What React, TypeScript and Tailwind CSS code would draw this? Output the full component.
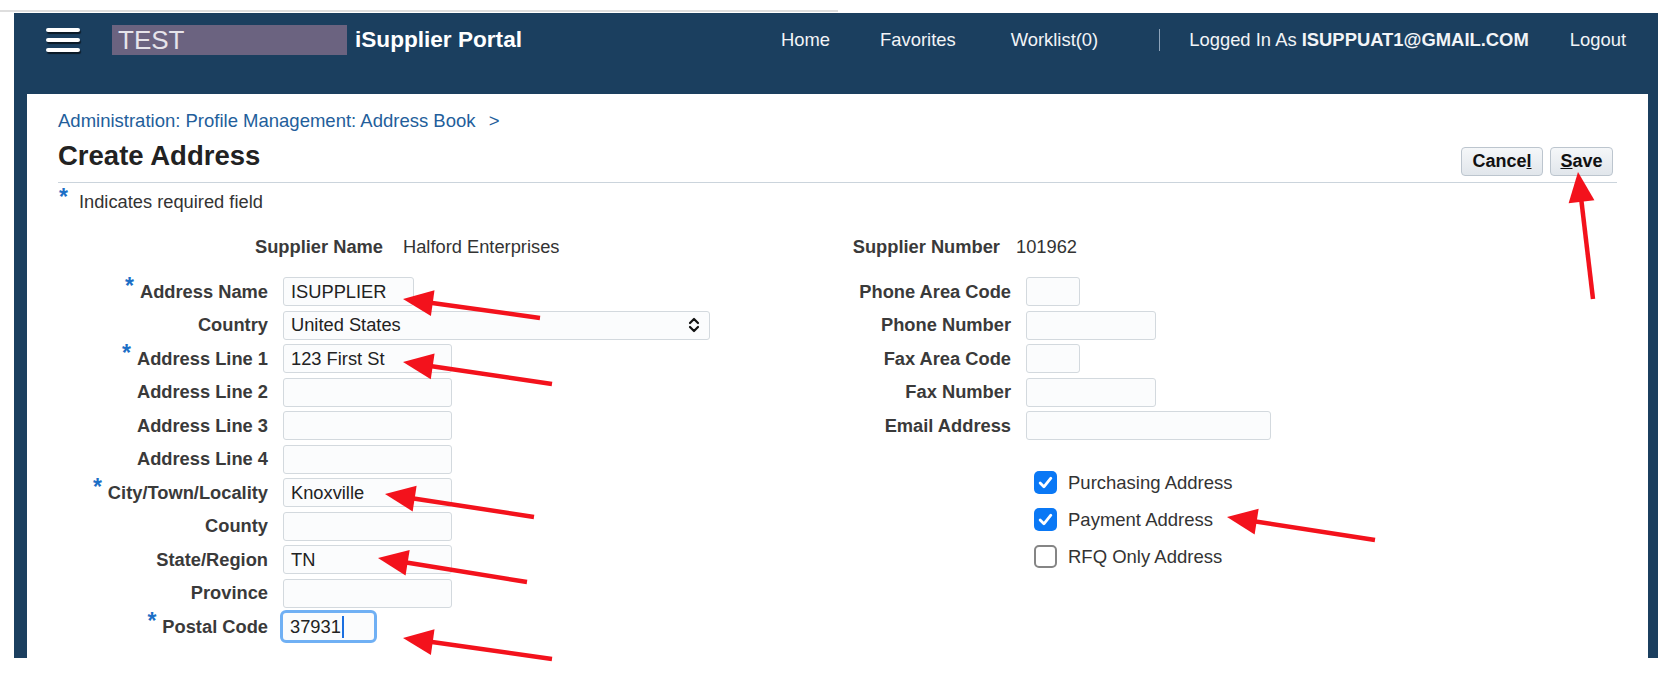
import React from "react";

type Arrow = { tip: [number, number]; tail: [number, number] };

const arrows: Arrow[] = [
  { tip: [403, 299], tail: [540, 318] },
  { tip: [403, 362], tail: [552, 384] },
  { tip: [385, 494], tail: [534, 517] },
  { tip: [378, 558], tail: [527, 582] },
  { tip: [403, 638], tail: [552, 659] },
  { tip: [1227, 517], tail: [1375, 540] },
  { tip: [1578, 172], tail: [1593, 299] },
];

function arrowHead(a: Arrow) {
  const [tx, ty] = a.tip;
  const [sx, sy] = a.tail;
  const len = Math.hypot(tx - sx, ty - sy);
  const ux = (tx - sx) / len;
  const uy = (ty - sy) / len;
  const bx = tx - ux * 30;
  const by = ty - uy * 30;
  const px = -uy * 13;
  const py = ux * 13;
  return {
    points: `${tx},${ty} ${bx + px},${by + py} ${bx - px},${by - py}`,
    lineEnd: [tx - ux * 24, ty - uy * 24],
  };
}

function Star() {
  return (
    <span className="relative top-[-4px] mr-[6px] text-[23px] font-bold leading-none text-[#1c6fc6]">*</span>
  );
}

function Field({ w, value }: { w: string; value?: string }) {
  return (
    <div className={`${w} h-[29px] rounded-[3px] border border-[#d3d9de] bg-[#fbfcfd] pl-[7px] text-[18.3px] leading-[27px] text-[#222]`}>
      {value}
    </div>
  );
}

const leftRows: { label: string; req?: boolean; w: string; value?: string }[] = [
  { label: "Address Name", req: true, w: "w-[131px]", value: "ISUPPLIER" },
  { label: "Country", w: "w-[427px]", value: "United States" },
  { label: "Address Line 1", req: true, w: "w-[169px]", value: "123 First St" },
  { label: "Address Line 2", w: "w-[169px]" },
  { label: "Address Line 3", w: "w-[169px]" },
  { label: "Address Line 4", w: "w-[169px]" },
  { label: "City/Town/Locality", req: true, w: "w-[169px]", value: "Knoxville" },
  { label: "County", w: "w-[169px]" },
  { label: "State/Region", w: "w-[169px]", value: "TN" },
  { label: "Province", w: "w-[169px]" },
  { label: "Postal Code", req: true, w: "w-[97px]", value: "37931" },
];

const rightRows = [
  { label: "Phone Area Code", w: "w-[54px]" },
  { label: "Phone Number", w: "w-[130px]" },
  { label: "Fax Area Code", w: "w-[54px]" },
  { label: "Fax Number", w: "w-[130px]" },
  { label: "Email Address", w: "w-[245px]" },
];

const checks = [
  { label: "Purchasing Address", on: true },
  { label: "Payment Address", on: true },
  { label: "RFQ Only Address", on: false },
];

export default function App() {
  return (
    <div className="relative h-[680px] w-[1676px] overflow-hidden bg-white font-['Liberation_Sans',Arial,sans-serif]">
      <div className="h-[13px] pt-[10px]">
        <div className="h-[2px] w-[838px] bg-[#dedede]" />
      </div>

      <div className="ml-[14px] mr-[18px] flex h-[645px] flex-col bg-[#1b3f5f]">
        {/* header */}
        <div className="flex h-[81px] items-start pt-[11px] pl-[32px] pr-[32px] text-white">
          <div className="flex h-[32px] items-center">
            <div className="flex w-[34px] flex-col gap-[6px]">
              <div className="h-[4px] rounded-[2px] bg-white shadow-[1px_2px_1px_rgba(0,0,0,0.6)]" />
              <div className="h-[4px] rounded-[2px] bg-white shadow-[1px_2px_1px_rgba(0,0,0,0.6)]" />
              <div className="h-[4px] rounded-[2px] bg-white shadow-[1px_2px_1px_rgba(0,0,0,0.6)]" />
            </div>
            <div className="ml-[32px] flex h-[30px] w-[235px] items-center bg-[#6b6380] pl-[6px] text-[26px] leading-none text-[#e6e4ea]">
              TEST
            </div>
            <div className="ml-[8px] text-[22.6px] font-bold">iSupplier Portal</div>
          </div>
          <div className="ml-auto flex h-[32px] items-center text-[18.4px] text-[#f2f4f7]">
            <span>Home</span>
            <span className="ml-[50px]">Favorites</span>
            <span className="ml-[55px]">Worklist(0)</span>
            <span className="ml-[61px] h-[22px] w-[1px] bg-[#8ea4bb]" />
            <span className="ml-[29px]">
              Logged In As <b>ISUPPUAT1@GMAIL.COM</b>
            </span>
            <span className="ml-[41px]">Logout</span>
          </div>
        </div>

        {/* content panel */}
        <div className="ml-[13px] mr-[10px] flex-1 bg-white pl-[31px] pr-[31px] pt-[16px] text-[#333]">
          <div className="text-[18.5px] leading-[21px] text-[#235e9b]">
            Administration: Profile Management: Address Book <span className="ml-[8px]">&gt;</span>
          </div>

          <div className="flex items-end justify-between border-b border-[#cbd4dc]">
            <h1 className="mb-[9px] mt-[8px] text-[27.5px] font-bold leading-[34px] text-[#222]">Create Address</h1>
            <div className="mb-[6px] mr-[4px] flex gap-[7px]">
              <button className="h-[29px] w-[82px] rounded-[4px] border border-[#bcc5ce] bg-gradient-to-b from-[#f5f7f9] to-[#e1e6eb] text-[18px] font-bold text-[#111]">
                Cance<span className="underline">l</span>
              </button>
              <button className="h-[29px] w-[63px] rounded-[4px] border border-[#bcc5ce] bg-gradient-to-b from-[#f5f7f9] to-[#e1e6eb] text-[18px] font-bold text-[#111]">
                <span className="underline">S</span>ave
              </button>
            </div>
          </div>

          <div className="mt-[8px] flex items-start text-[18.3px] leading-[22px] text-[#333]">
            <span className="mr-[11px] mt-[-5px] ml-[1px] text-[23px] font-bold text-[#1c6fc6]">*</span>
            <span>Indicates required field</span>
          </div>

          {/* supplier row */}
          <div className="mt-[22px] flex h-[24px] items-center text-[18.3px]">
            <div className="flex w-[737px] items-center">
              <div className="w-[325px] text-right font-bold text-[#3a3a3a]">Supplier Name</div>
              <div className="ml-[20px]">Halford Enterprises</div>
            </div>
            <div className="w-[205px] text-right font-bold text-[#3a3a3a]">Supplier Number</div>
            <div className="ml-[16px]">101962</div>
          </div>

          {/* form */}
          <div className="mt-[18px] flex items-start text-[18.3px]">
            <div className="flex w-[738px] flex-col gap-[4.5px]">
              {leftRows.map((r) => (
                <div key={r.label} className="flex h-[29px] items-center">
                  <div className="w-[210px] text-right font-bold text-[#3a3a3a]">
                    {r.req && <Star />}
                    {r.label}
                  </div>
                  <div className="ml-[15px]">
                    {r.label === "Country" ? (
                      <div className="flex h-[29px] w-[427px] items-center justify-between rounded-[3px] border border-[#d3d9de] bg-[#fbfcfd] pl-[7px] pr-[9px] text-[18.3px] text-[#222]">
                        <span>United States</span>
                        <svg width="12" height="16" viewBox="0 0 12 16" fill="none" stroke="#111" strokeWidth="2.2" strokeLinecap="round" strokeLinejoin="round">
                          <path d="M2 6 L6 2 L10 6" />
                          <path d="M2 10 L6 14 L10 10" />
                        </svg>
                      </div>
                    ) : r.label === "Postal Code" ? (
                      <div className="ml-[-3px] flex h-[33px] w-[97px] items-center rounded-[6px] border-[3px] border-[#70b0f4] bg-[#fbfcfd] pl-[7px] text-[18.3px] text-[#222]">
                        37931
                        <span className="ml-[1px] h-[22px] w-[2px] bg-[#1a6fe0]" />
                      </div>
                    ) : (
                      <Field w={r.w} value={r.value} />
                    )}
                  </div>
                </div>
              ))}
            </div>

            <div className="flex flex-col">
              <div className="flex flex-col gap-[4.5px]">
                {rightRows.map((r) => (
                  <div key={r.label} className="flex h-[29px] items-center">
                    <div className="w-[215px] text-right font-bold text-[#3a3a3a]">{r.label}</div>
                    <div className="ml-[15px]">
                      <Field w={r.w} />
                    </div>
                  </div>
                ))}
              </div>
              <div className="ml-[238px] mt-[31px] flex flex-col gap-[14px]">
                {checks.map((c) => (
                  <div key={c.label} className="flex h-[23px] items-center">
                    {c.on ? (
                      <div className="flex h-[23px] w-[23px] items-center justify-center rounded-[5px] bg-[#0a78f5]">
                        <svg width="15" height="13" viewBox="0 0 14 12" fill="none" stroke="white" strokeWidth="2.6" strokeLinecap="round" strokeLinejoin="round">
                          <path d="M2 6.5 L5.5 10 L12 2" />
                        </svg>
                      </div>
                    ) : (
                      <div className="h-[23px] w-[23px] rounded-[5px] border-2 border-[#858585] bg-white" />
                    )}
                    <span className="ml-[11px] text-[18.5px] text-[#333]">{c.label}</span>
                  </div>
                ))}
              </div>
            </div>
          </div>
        </div>
      </div>

      {/* annotation arrows */}
      <svg className="pointer-events-none absolute left-0 top-0" width="1676" height="680">
        {arrows.map((a, i) => {
          const h = arrowHead(a);
          return (
            <g key={i}>
              <line x1={a.tail[0]} y1={a.tail[1]} x2={h.lineEnd[0]} y2={h.lineEnd[1]} stroke="#f3121c" strokeWidth="4.5" />
              <polygon points={h.points} fill="#f3121c" />
            </g>
          );
        })}
      </svg>
    </div>
  );
}
